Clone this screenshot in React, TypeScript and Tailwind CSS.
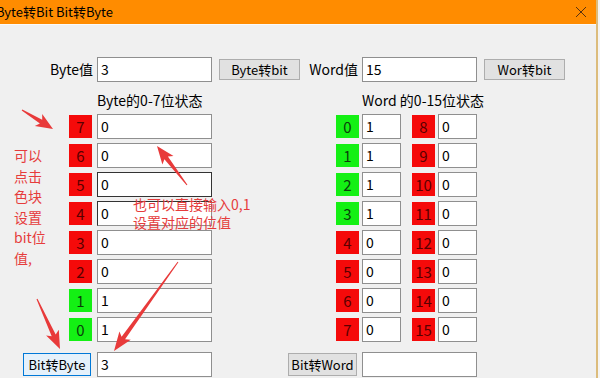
import React from "react";

const font = { fontFamily: '"Noto Sans CJK SC", "Noto Sans", sans-serif' };

function arrowPts(tx: number, ty: number, hx: number, hy: number, headLen = 14, headW = 7) {
  const dx = hx - tx;
  const dy = hy - ty;
  const len = Math.hypot(dx, dy);
  const ux = dx / len;
  const uy = dy / len;
  const px = -uy;
  const py = ux;
  const bx = hx - ux * headLen;
  const by = hy - uy * headLen;
  const wx = hx - ux * (headLen + 3);
  const wy = hy - uy * (headLen + 3);
  const pts: [number, number][] = [
    [tx + px * 0.5, ty + py * 0.5],
    [bx + px * 2.2, by + py * 2.2],
    [wx + px * headW, wy + py * headW],
    [hx, hy],
    [wx - px * headW, wy - py * headW],
    [bx - px * 2.2, by - py * 2.2],
    [tx - px * 0.5, ty - py * 0.5],
  ];
  return pts.map((p) => `${p[0].toFixed(1)},${p[1].toFixed(1)}`).join(" ");
}

function Sq({ n, on }: { n: number; on: boolean }) {
  return (
    <div
      className={
        "w-[23px] h-[23px] flex items-center justify-center text-[15px] leading-none " +
        (on ? "bg-[#14f014] text-[#0b3d0b]" : "bg-[#f50a0a] text-[#5a0000]")
      }
    >
      {n}
    </div>
  );
}

function Box({ v, w, cls = "" }: { v: string; w: string; cls?: string }) {
  return (
    <div
      className={
        "h-[25px] bg-white border flex items-center pl-[3px] text-[14px] text-black " + w + " " + (cls || "border-[#8f8f8f]")
      }
    >
      {v}
    </div>
  );
}

export default function App() {
  const byteBits = [0, 0, 0, 0, 0, 0, 1, 1];
  const wordLeft = [1, 1, 1, 1, 0, 0, 0, 0];
  return (
    <div className="w-[600px] h-[378px] overflow-hidden flex bg-[#f0f0f0] relative" style={font}>
      <div className="w-[596px] h-full flex flex-col">
        <div className="h-[24px] bg-[#ff8c00] flex items-center justify-between shrink-0">
          <span className="text-[13px] text-black ml-[-4px] whitespace-nowrap">Byte转Bit Bit转Byte</span>
          <svg width="12" height="12" viewBox="0 0 12 12" className="mr-[9px]">
            <path d="M1 1 L11 11 M11 1 L1 11" stroke="#5a3210" strokeWidth="1" />
          </svg>
        </div>
        <div className="h-[1px] bg-[#fafafa]" />
        <div className="flex-1 text-[14px] text-black">
          <div className="flex items-center h-[25px] mt-[32px]">
            <div className="w-[97px] text-right pr-[4px] whitespace-nowrap">Byte值</div>
            <Box v="3" w="w-[115px]" />
            <button className="ml-[7px] w-[81px] h-[21px] bg-[#e1e1e1] border border-[#adadad] text-[13px] leading-none whitespace-nowrap">
              Byte转bit
            </button>
            <div className="w-[62px] text-right pr-[4px] whitespace-nowrap">Word值</div>
            <Box v="15" w="w-[115px]" />
            <button className="ml-[7px] w-[81px] h-[21px] bg-[#e1e1e1] border border-[#adadad] text-[13px] leading-none whitespace-nowrap">
              Wor转bit
            </button>
          </div>
          <div className="flex items-center h-[20px] mt-[8px]">
            <div className="w-[97px]" />
            <div className="w-[265px] whitespace-nowrap">Byte的0-7位状态</div>
            <div className="whitespace-nowrap">Word 的0-15位状态</div>
          </div>
          <div className="flex flex-col gap-[4px] mt-[4px]">
            {byteBits.map((b, i) => {
              const bit = 7 - i;
              const wl = i;
              const wr = i + 8;
              const extra =
                i === 2 ? "border-[#333]" : i === 3 ? "border-[#8f8f8f] border-t-[#333] border-l-[#333]" : "";
              return (
                <div key={i} className="flex items-center h-[25px]">
                  <div className="w-[69px]" />
                  <Sq n={bit} on={b === 1} />
                  <div className="w-[5px]" />
                  <Box v={String(b)} w="w-[115px]" cls={extra} />
                  <div className="w-[124px]" />
                  <Sq n={wl} on={wordLeft[i] === 1} />
                  <div className="w-[3px]" />
                  <Box v={String(wordLeft[i])} w="w-[39px]" />
                  <div className="w-[11px]" />
                  <Sq n={wr} on={false} />
                  <div className="w-[3px]" />
                  <Box v="0" w="w-[39px]" />
                </div>
              );
            })}
          </div>
          <div className="flex items-center h-[25px] mt-[10px]">
            <div className="w-[23px]" />
            <button className="w-[68px] h-[23px] bg-[#e5f1fb] border border-[#0078d7] text-[13px] leading-none whitespace-nowrap px-0">
              Bit转Byte
            </button>
            <div className="w-[6px]" />
            <Box v="3" w="w-[115px]" />
            <div className="w-[76px]" />
            <button className="w-[69px] h-[23px] bg-[#e1e1e1] border border-[#adadad] text-[13px] leading-none whitespace-nowrap px-0">
              Bit转Word
            </button>
            <div className="w-[5px]" />
            <Box v="" w="w-[115px]" />
          </div>
        </div>
      </div>
      <div className="w-[2px] h-full bg-[#dcbc7c]" />
      <div className="w-[2px] h-full bg-[#f4f4f4]" />

      <div className="absolute left-[14px] top-[145px] text-[14px] leading-[20.5px] text-[#e63c3c]">
        <div>可以</div>
        <div>点击</div>
        <div>色块</div>
        <div>设置</div>
        <div>bit位</div>
        <div>值,</div>
      </div>
      <div className="absolute left-[133px] top-[195px] text-[14px] leading-[18px] text-[#e63c3c] whitespace-nowrap">
        <div>也可以直接输入0,1</div>
        <div>设置对应的位值</div>
      </div>
      <svg className="absolute left-0 top-0 pointer-events-none" width="600" height="378">
        <polygon points={arrowPts(22, 110, 53, 129, 14, 7)} fill="#e83a3a" />
        <polygon points={arrowPts(187, 185, 157, 146, 15, 7)} fill="#e83a3a" />
        <polygon points={arrowPts(37, 299, 60, 349, 15, 7)} fill="#e83a3a" />
        <polygon points={arrowPts(178, 262, 114, 351, 16, 7)} fill="#e83a3a" />
      </svg>
    </div>
  );
}
